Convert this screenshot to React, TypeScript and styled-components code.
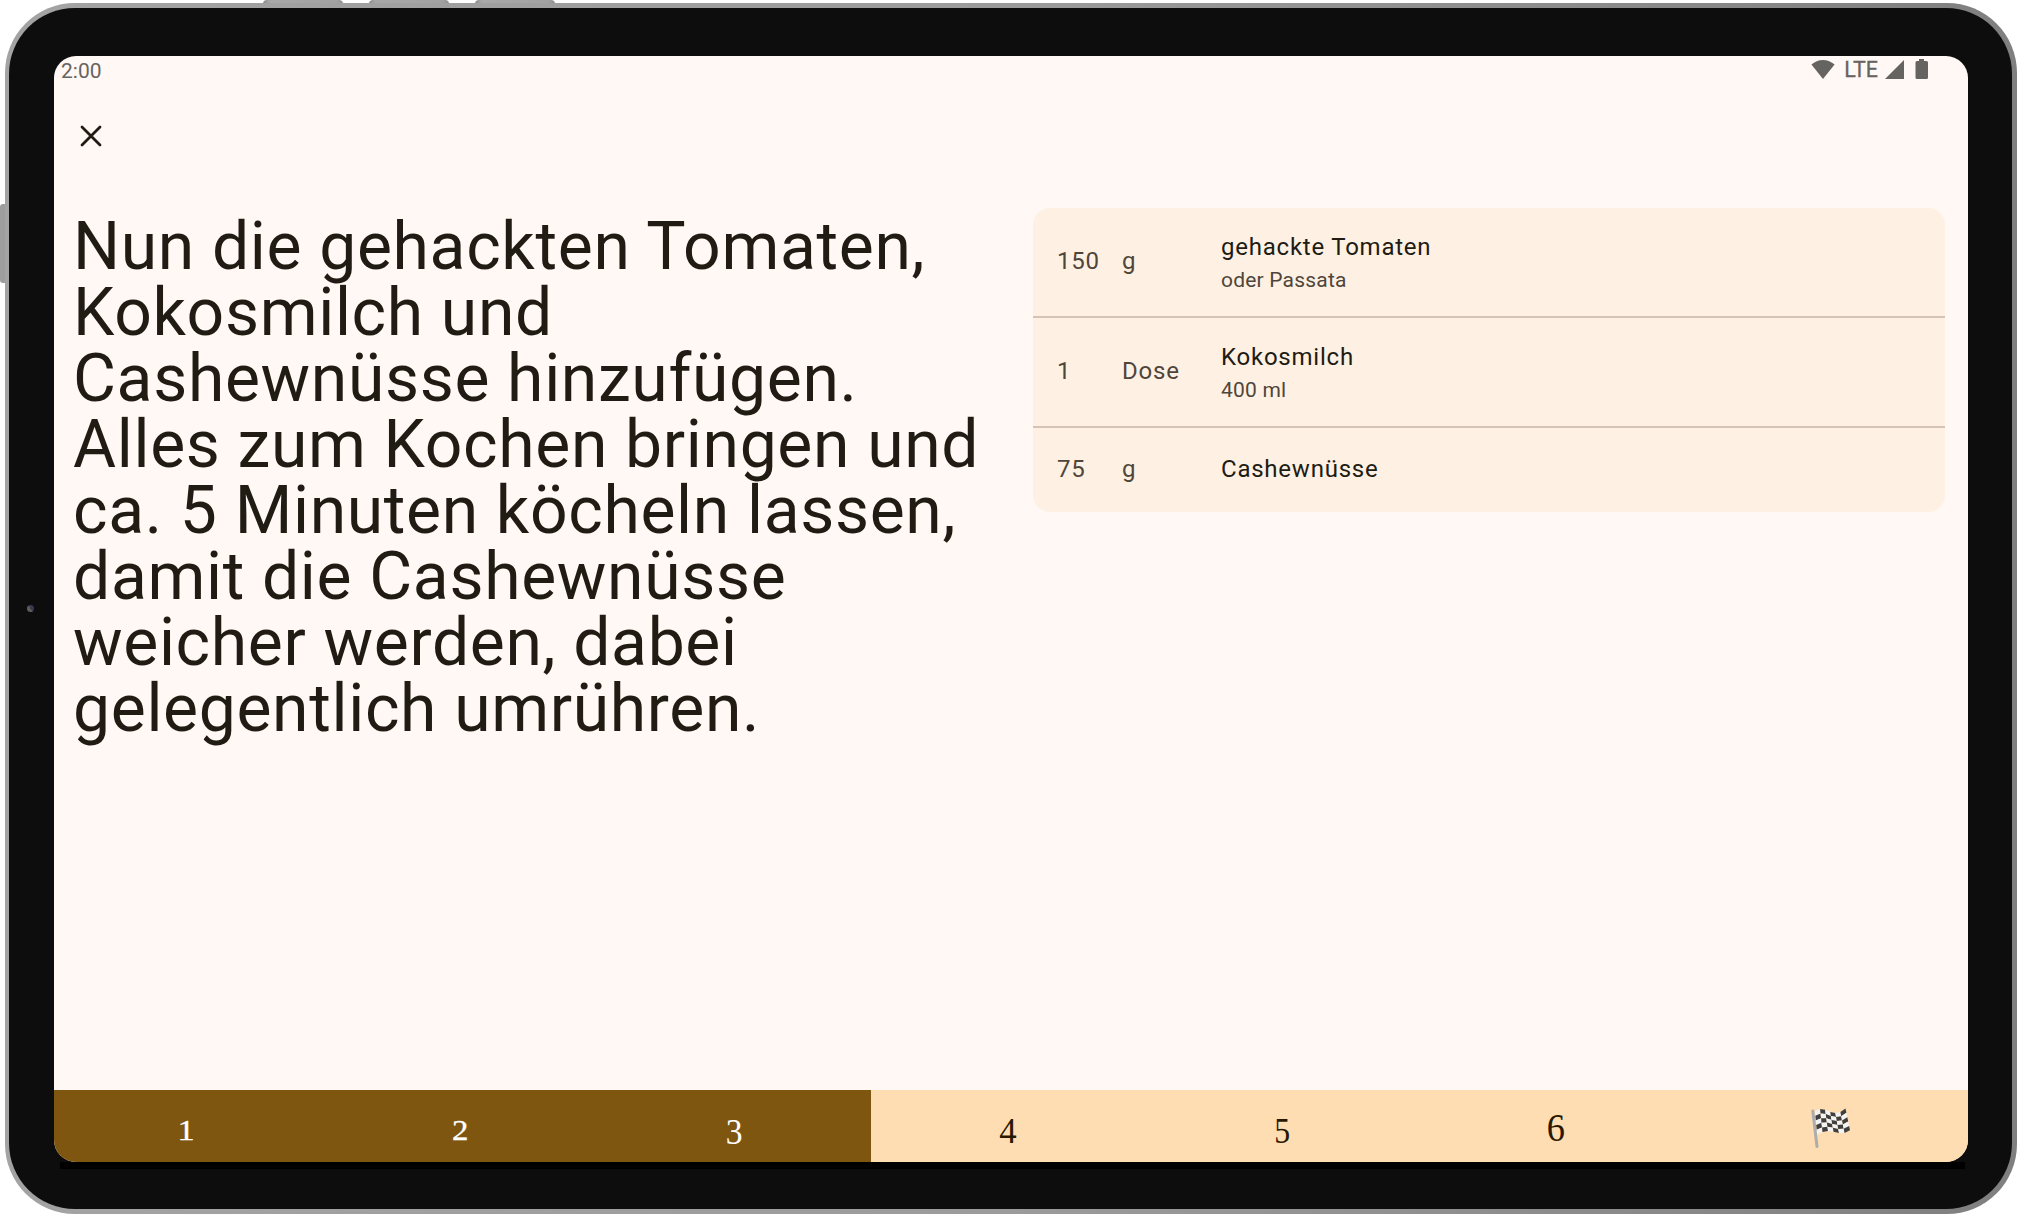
import React from "react";
import styled, { createGlobalStyle } from "styled-components";

const Global = createGlobalStyle`
  html, body { margin: 0; padding: 0; background: #fff; }
  * { box-sizing: border-box; }
`;

const Stage = styled.div`
  position: relative;
  width: 2017px;
  height: 1214px;
  padding: 3px 0 0 4.5px;
  overflow: hidden;
  font-family: Roboto, sans-serif;
`;

const TopKey = styled.div<{ $x: number }>`
  position: absolute;
  top: 0;
  left: ${(p) => p.$x}px;
  width: 80px;
  height: 4px;
  border-radius: 4px 4px 0 0;
  background: linear-gradient(90deg, #8a8a8a, #a8a8a8 8%, #a2a2a2 92%, #8f8f8f);
`;

const SideKey = styled.div`
  position: absolute;
  top: 204px;
  left: 0;
  width: 5px;
  height: 79px;
  border-radius: 3px 0 0 3px;
  background: #9d9d9d;
`;

const Frame = styled.div`
  position: relative;
  width: 2012.5px;
  height: 1211px;
  padding: 5px 5px 5px 4.5px;
  border-radius: 70px;
  background: linear-gradient(90deg, #a3a3a3, #9b9b9b 50%, #7f7f7f);
`;

const Bezel = styled.div`
  width: 100%;
  height: 100%;
  padding: 48px 0 0 45px;
  border-radius: 66px;
  background: #0d0d0d;
`;

const Camera = styled.div`
  position: absolute;
  left: 22px;
  top: 602px;
  width: 7px;
  height: 7px;
  border-radius: 50%;
  background: linear-gradient(50deg, #5d5d5d 50%, #3a3850 50%);
`;

const Display = styled.div`
  display: flex;
  flex-direction: column;
  width: 1913.5px;
  height: 1106px;
  border-radius: 22px;
  overflow: hidden;
  background: #fff8f5;
`;

const Lip = styled.div`
  width: 1905px;
  height: 7px;
  margin-left: 6px;
  background: #000;
`;

const StatusBar = styled.div`
  display: flex;
  justify-content: space-between;
  height: 33px;
  padding: 0 40px 0 7px;
  font-size: 21px;
  line-height: 31px;
  color: #666461;
`;

const StatusIcons = styled.div`
  display: flex;
  align-items: flex-start;
  svg { display: block; margin-top: 3px; }
`;

const Network = styled.span`
  margin: 0 6.5px 0 9.5px;
  font-size: 21.5px;
  line-height: 28px;
  font-weight: 400;
  -webkit-text-stroke: 0.3px currentColor;
`;

const AppBar = styled.div`
  display: flex;
  align-items: center;
  height: 92px;
  padding: 2px 0 0 26px;
`;

const CloseButton = styled.button`
  display: flex;
  padding: 0;
  border: 0;
  background: none;
`;

const Content = styled.main`
  display: grid;
  grid-template-columns: 940px 912px;
  column-gap: 20px;
  flex: 1;
  align-items: start;
  padding: 27px 0 0 19px;
`;

const Instruction = styled.p`
  margin: 6px 0 0;
  font-size: 66px;
  line-height: 66px;
  letter-spacing: 0.66px;
  color: #201b13;
  white-space: nowrap;
`;

const Card = styled.section`
  border-radius: 17px;
  overflow: hidden;
  background: #fef1e4;
`;

const Ingredient = styled.div<{ $height: number }>`
  display: grid;
  grid-template-columns: 65px 99px 1fr;
  align-items: center;
  height: ${(p) => p.$height}px;
  padding: 0 0 0 24px;
  font-size: 24px;
  line-height: 33px;
  letter-spacing: 0.77px;
  color: #50453a;
  & + & { border-top: 2px solid #d5c4b5; }
  &:last-child { padding-bottom: 1px; }
`;

const Name = styled.div<{ $paired: boolean }>`
  padding-top: ${(p) => (p.$paired ? 3 : 0)}px;
  color: #201b13;
`;

const Amount = styled.span`
  margin-top: -1px;
`;

const Note = styled.div`
  font-size: 21px;
  letter-spacing: 0.2px;
`;

const Steps = styled.nav`
  display: grid;
  grid-template-columns: repeat(6, 274px) 275px;
  height: 72px;
  margin-left: -5px;
`;

const Step = styled.div<{ $done?: boolean }>`
  display: flex;
  justify-content: center;
  align-items: flex-start;
  height: 72px;
  background: ${(p) => (p.$done ? "#7f5610" : "#ffddb3")};
  color: ${(p) => (p.$done ? "#fff" : "#291800")};
  font-family: "Liberation Serif", serif;
`;

const Numeral = styled.span<{ $size: number; $base: number; $stretch: number; $weight: number }>`
  display: block;
  font-size: ${(p) => p.$size}px;
  line-height: 40px;
  margin-top: ${(p) => p.$base - 20 - p.$size * 0.34}px;
  transform: scaleX(${(p) => p.$stretch});
  -webkit-text-stroke: ${(p) => p.$weight}px currentColor;
`;

const FlagBox = styled.div`
  margin-top: 18px;
`;

const steps = [
  { n: 1, size: 28.5, base: 51, stretch: 1.2, weight: 0.3, done: true },
  { n: 2, size: 28.5, base: 51, stretch: 1.15, weight: 0.3, done: true },
  { n: 3, size: 36.5, base: 54.5, stretch: 0.92, weight: 0, done: true },
  { n: 4, size: 35.5, base: 53, stretch: 0.98, weight: 0 },
  { n: 5, size: 36.5, base: 53.5, stretch: 0.87, weight: 0 },
  { n: 6, size: 39.5, base: 51.5, stretch: 0.92, weight: 0 },
];

const ingredients = [
  { amount: "150", unit: "g", name: "gehackte Tomaten", note: "oder Passata", h: 108 },
  { amount: "1", unit: "Dose", name: "Kokosmilch", note: "400 ml", h: 110 },
  { amount: "75", unit: "g", name: "Cashewnüsse", h: 86 },
];

const lines = [
  "Nun die gehackten Tomaten,",
  "Kokosmilch und",
  "Cashewnüsse hinzufügen.",
  "Alles zum Kochen bringen und",
  "ca. 5 Minuten köcheln lassen,",
  "damit die Cashewnüsse",
  "weicher werden, dabei",
  "gelegentlich umrühren.",
];

// Upper and lower hem of the waving cloth, one height per column edge.
const TOP = [3, 1, 1.8, 4, 5, 4, 0.5];
const BOTTOM = [26.5, 24, 23, 23.8, 25, 25, 22.3];
const COLS = 6;
const ROWS = 5;

function corner(c: number, r: number): string {
  const t = r / ROWS;
  const u = c / COLS;
  const x = (4 + u * 30.5) * (1 - t) + (6 + u * 33) * t;
  const y = TOP[c] * (1 - t) + BOTTOM[c] * t;
  return `${x.toFixed(2)},${y.toFixed(2)}`;
}

function Flag() {
  const cells: React.ReactNode[] = [];
  for (let r = 0; r < ROWS; r++) {
    for (let c = 0; c < COLS; c++) {
      const pts = [corner(c, r), corner(c + 1, r), corner(c + 1, r + 1), corner(c, r + 1)].join(" ");
      cells.push(<polygon key={`${r}-${c}`} points={pts} fill={(r + c) % 2 ? "#3f3f3f" : "#f3f3f3"} />);
    }
  }
  return (
    <svg width="40" height="42" viewBox="0 0 40 42">
      {cells}
      <path d="M1.8 3 L6 38.5" stroke="#adadad" strokeWidth="3" strokeLinecap="round" />
    </svg>
  );
}

export default function App() {
  return (
    <Stage>
      <Global />
      <TopKey $x={262.5} />
      <TopKey $x={368.5} />
      <TopKey $x={474.5} />
      <SideKey />
      <Frame>
        <Bezel>
          <Display>
            <StatusBar>
              <span>2:00</span>
              <StatusIcons>
                <svg width="24" height="20" viewBox="0 0 24 20" fill="#666461">
                  <path d="M12 20 L0.4 5.6 C3.6 2.7 7.6 1 12 1 C16.4 1 20.4 2.7 23.6 5.6 Z" />
                </svg>
                <Network>LTE</Network>
                <svg width="20" height="20" viewBox="0 0 20 20" fill="#666461">
                  <path d="M0 20 L19 1 V20 Z" />
                </svg>
                <svg width="23" height="20" viewBox="0 0 23 20" fill="#666461">
                  <path d="M14 0 h5 v2 h2.5 a1.5 1.5 0 0 1 1.5 1.5 V18.5 a1.5 1.5 0 0 1 -1.5 1.5 H12 a1.5 1.5 0 0 1 -1.5 -1.5 V3.5 a1.5 1.5 0 0 1 1.5 -1.5 h2 Z" />
                </svg>
              </StatusIcons>
            </StatusBar>
            <AppBar>
              <CloseButton aria-label="Schließen">
                <svg width="22" height="22" viewBox="0 0 22 22">
                  <path d="M2 2 L20 20 M20 2 L2 20" stroke="#201b13" strokeWidth="2.8" strokeLinecap="round" />
                </svg>
              </CloseButton>
            </AppBar>
            <Content>
              <Instruction>
                {lines.map((l) => (
                  <React.Fragment key={l}>
                    {l}
                    <br />
                  </React.Fragment>
                ))}
              </Instruction>
              <Card>
                {ingredients.map((i) => (
                  <Ingredient key={i.name} $height={i.h}>
                    <Amount>{i.amount}</Amount>
                    <Amount>{i.unit}</Amount>
                    <div>
                      <Name $paired={Boolean(i.note)}>{i.name}</Name>
                      {i.note && <Note>{i.note}</Note>}
                    </div>
                  </Ingredient>
                ))}
              </Card>
            </Content>
            <Steps>
              {steps.map((s) => (
                <Step key={s.n} $done={s.done}>
                  <Numeral $size={s.size} $base={s.base} $stretch={s.stretch} $weight={s.weight}>
                    {s.n}
                  </Numeral>
                </Step>
              ))}
              <Step>
                <FlagBox>
                  <Flag />
                </FlagBox>
              </Step>
            </Steps>
          </Display>
          <Lip />
        </Bezel>
        <Camera />
      </Frame>
    </Stage>
  );
}
